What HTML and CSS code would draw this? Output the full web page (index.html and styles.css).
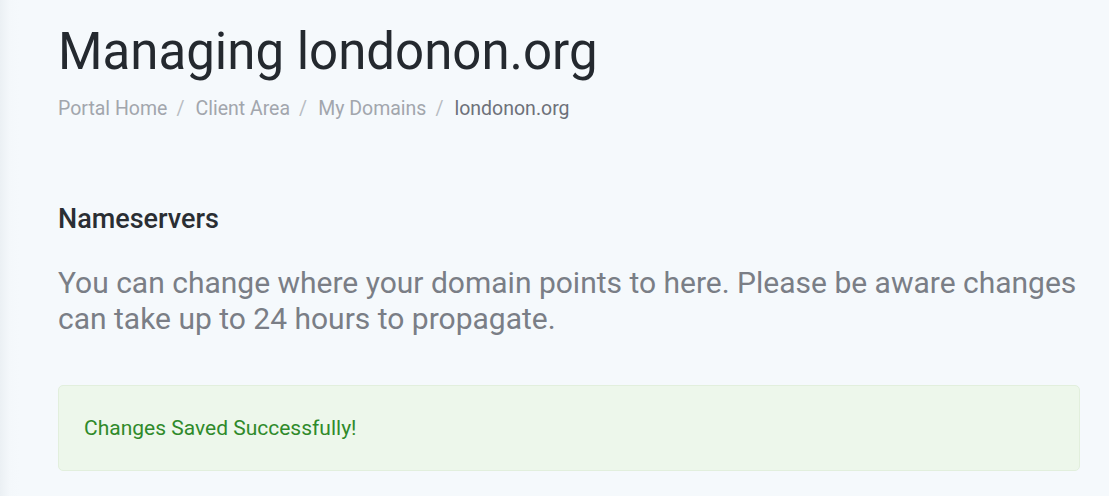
FILE: index.html
```html
<!DOCTYPE html>
<html lang="en">
<head>
    <meta charset="UTF-8">
    <meta name="viewport" content="width=device-width, initial-scale=1.0">
    <title>Managing londonon.org</title>
    <link rel="stylesheet" href="styles.css">
</head>
<body>
    <div class="main">
        <div class="header">
            <h1>Managing londonon.org</h1>
            <ol class="breadcrumb">
                <li><a href="#">Portal Home</a></li>
                <li><a href="#">Client Area</a></li>
                <li><a href="#">My Domains</a></li>
                <li class="active">londonon.org</li>
            </ol>
        </div>

        <div class="section">
            <h3>Nameservers</h3>
            <p class="lead">You can change where your domain points to here. Please be aware changes can take up to 24 hours to propagate.</p>

            <div class="alert-success">
                Changes Saved Successfully!
            </div>
        </div>
    </div>
</body>
</html>
```

FILE: styles.css
```css
/* Domain management page */
body {
    margin: 0;
    background: linear-gradient(to right, #ebf0f4 0, #f4f8fb 10px, #f5f9fc 20px);
    font-family: Roboto, "Liberation Sans", Arial, sans-serif;
    color: #25292e;
}
.main {
    padding: 22px 29px 0 58px;
}
h1 {
    font-size: 51px;
    font-weight: 400;
    line-height: 60px;
    margin: 0;
    color: #24292f;
}
.breadcrumb {
    display: flex;
    list-style: none;
    margin: 14px 0 0;
    padding: 0;
    font-size: 19.5px;
    line-height: 26px;
}
.breadcrumb li + li::before {
    content: "/";
    padding: 0 11px 0 9px;
    color: #b8bcc2;
}
.breadcrumb a {
    color: #a2a6ad;
    text-decoration: none;
}
.breadcrumb .active {
    color: #6d7179;
}
.section {
    padding-top: 81px;
}
h3 {
    font-size: 27px;
    font-weight: 500;
    line-height: 32px;
    margin: 0;
    color: #2a2e33;
}
.lead {
    font-size: 30px;
    line-height: 36px;
    color: #7a7e86;
    margin: 30px 0 0;
}
.alert-success {
    margin-top: 48px;
    padding: 29px 25px;
    background-color: #edf7eb;
    border: 1px solid #e2efdd;
    border-radius: 5px;
    font-size: 21px;
    line-height: 26px;
    color: #2f8a2a;
}
```
